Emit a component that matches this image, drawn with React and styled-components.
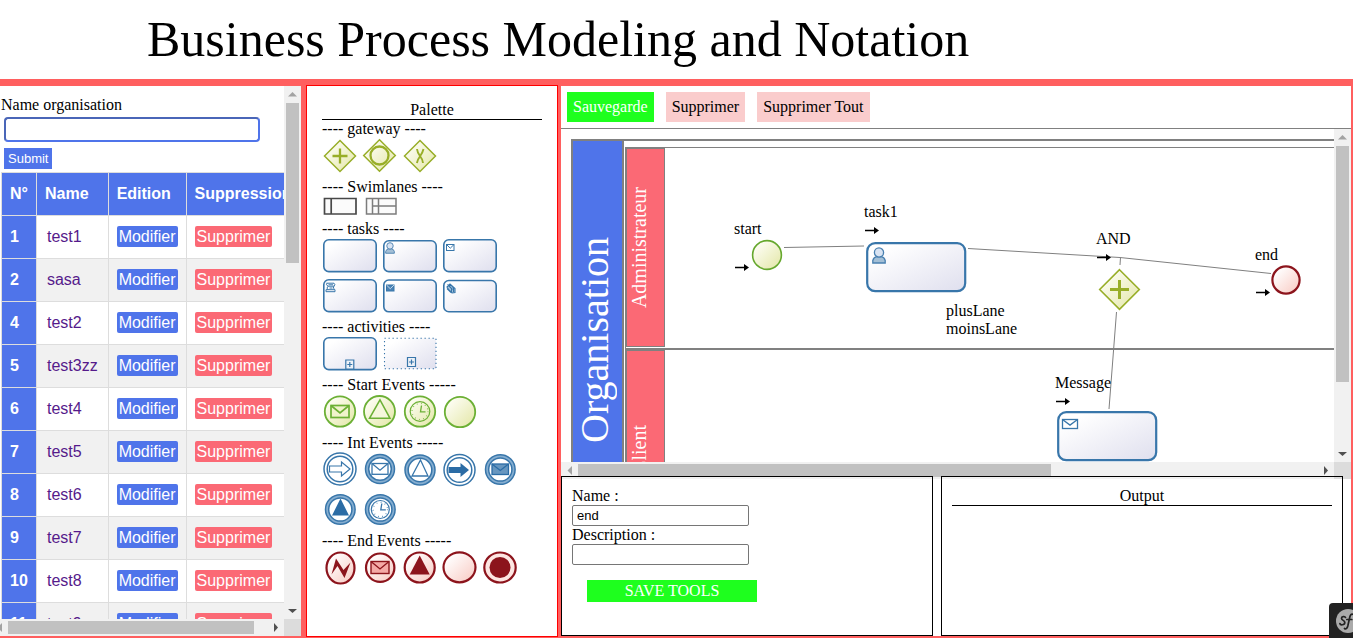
import React from "react";
import styled, { createGlobalStyle, css } from "styled-components";

const BLUE = "#4f74ea";
const PINK = "#fb6975";
const FRAME = "#ff5f5f";
const GREEN = "#1eff1e";
const SANS = '"Liberation Sans", Arial, sans-serif';

const GlobalStyle = createGlobalStyle`
  *, *::before, *::after { box-sizing: border-box; }
  body {
    margin: 0;
    background: #fff;
    color: #000;
    font: 16px/18px "Liberation Serif", "Times New Roman", serif;
  }
  button, input { font-family: inherit; margin: 0; }
`;

const Page = styled.div`
  display: flex;
  flex-direction: column;
  height: 100vh;
  overflow: hidden;
`;

const Title = styled.h1`
  margin: 0;
  padding-left: 147px;
  font-size: 50px;
  font-weight: 400;
  line-height: 79px;
  white-space: nowrap;
`;

const Workspace = styled.main`
  flex: 1;
  min-height: 0;
  display: flex;
  background: ${FRAME};
  padding: 6px 2px 1px 0;
`;

/* ---------- scroll bars ---------- */

const ScrollFrame = styled.div`
  display: grid;
  grid-template-columns: minmax(0, 1fr) 17px;
  grid-template-rows: minmax(0, 1fr) 17px;
  background: #fff;
  min-height: 0;
`;

const Viewport = styled.div`
  position: relative;
  overflow: hidden;
  min-width: 0;
`;

const Track = styled.div`
  display: flex;
  flex-direction: ${(p) => (p.$vertical ? "column" : "row")};
  background: #f1f1f1;
  min-width: 0;
  min-height: 0;
  overflow: hidden;
`;

const TrackRun = styled.div`
  flex: 1;
  display: flex;
  min-height: 0;
  flex-direction: ${(p) => (p.$vertical ? "column" : "row")};
  padding: ${(p) => (p.$vertical ? "0 2px" : "2px 0")};
`;

const Thumb = styled.div`
  background: #c1c1c1;
  flex: 0 0 ${(p) => p.$share}%;
`;

const TrackEnd = styled.div`
  flex: 0 0 ${(p) => p.$size || 17}px;
  display: flex;
  align-items: center;
  justify-content: ${(p) => (p.$size ? "flex-end" : "center")};
  min-width: 0;
  min-height: 17px;
  overflow: hidden;
  svg { flex: none; }
`;

const Corner = styled.div`
  background: #dcdcdc;
`;

const arrowPaths = {
  up: "M4 10.500 8.500 6 13 10.500z",
  down: "M4 7h9L8.500 11z",
  left: "M11 4v9L6.500 8.500z",
  right: "M7 4v9l4-4.500z",
};

function ScrollArrow({ dir, dim }) {
  return (
    <svg width="17" height="17" aria-hidden="true">
      <path d={arrowPaths[dir]} fill={dim ? "#a3a3a3" : "#505050"} />
    </svg>
  );
}

function ScrollBar({ vertical, share, startSize }) {
  return (
    <Track $vertical={vertical} aria-hidden="true">
      <TrackEnd $size={startSize}>
        <ScrollArrow dir={vertical ? "up" : "left"} dim />
      </TrackEnd>
      <TrackRun $vertical={vertical}>
        <Thumb $share={share} />
      </TrackRun>
      <TrackEnd>
        <ScrollArrow dir={vertical ? "down" : "right"} />
      </TrackEnd>
    </Track>
  );
}

/* ---------- organisation list ---------- */

const Sidebar = styled(ScrollFrame)`
  flex: 0 0 301px;
  margin: 1px 5px 1px 0;
`;

const OrgForm = styled.form`
  display: flex;
  flex-direction: column;
  align-items: flex-start;
  padding: 10px 0 3px 1px;
`;

const OrgInput = styled.input`
  width: 256px;
  height: 25px;
  margin: 3px 3px 6px;
  padding: 0 4px;
  border: 2px solid ${BLUE};
  border-top-color: #4a66b8;
  border-left-color: #4a66b8;
  border-radius: 4px;
  outline: none;
`;

const SubmitButton = styled.button`
  height: 21px;
  margin-left: 3px;
  padding: 0 4px;
  border: 0;
  background: ${BLUE};
  color: #fff;
  font: 13px/21px ${SANS};
`;

const OrgTable = styled.table`
  margin-left: 1px;
  border-collapse: collapse;
  font: 16px/18px ${SANS};

  th, td {
    height: 43px;
    padding: 0 8px;
    border: 1px solid #ddd;
    text-align: left;
    white-space: nowrap;
  }
  th { background: ${BLUE}; color: #fff; }
  tbody tr:nth-child(even) { background: #f1f1f1; }
`;

const OrgLink = styled.a`
  padding: 0 2px;
  color: #551a8b;
  text-decoration: none;
`;

const RowButton = styled.button`
  display: block;
  height: 21px;
  margin-bottom: 1px;
  padding: 0 2px;
  border: 0;
  border-radius: 2px;
  background: ${(p) => (p.$danger ? PINK : BLUE)};
  color: #fff;
  font: 16px/21px ${SANS};
`;

const organisations = [
  [1, "test1"],
  [2, "sasa"],
  [4, "test2"],
  [5, "test3zz"],
  [6, "test4"],
  [7, "test5"],
  [8, "test6"],
  [9, "test7"],
  [10, "test8"],
  [11, "test9"],
];

function OrganisationList() {
  return (
    <Sidebar>
      <Viewport>
        <OrgForm onSubmit={(e) => e.preventDefault()}>
          <label htmlFor="organisation">Name organisation</label>
          <OrgInput id="organisation" type="text" />
          <SubmitButton type="submit">Submit</SubmitButton>
        </OrgForm>
        <OrgTable>
          <thead>
            <tr>
              <th>N°</th>
              <th>Name</th>
              <th>Edition</th>
              <th>Suppression</th>
            </tr>
          </thead>
          <tbody>
            {organisations.map(([id, name]) => (
              <tr key={id}>
                <th scope="row">{id}</th>
                <td><OrgLink href="#">{name}</OrgLink></td>
                <td><RowButton type="button">Modifier</RowButton></td>
                <td><RowButton type="button" $danger>Supprimer</RowButton></td>
              </tr>
            ))}
          </tbody>
        </OrgTable>
      </Viewport>
      <ScrollBar vertical share={32} />
      <ScrollBar share={95} startSize={8} />
      <Corner />
    </Sidebar>
  );
}

/* ---------- drawings shared by palette and canvas ---------- */

const LIME = "#98ae28";
const LEAF = "#6cb035";
const STEEL = "#3876aa";
const WINE = "#8c141c";

function Gradients() {
  const ramp = (id, from, to) => (
    <linearGradient id={id} x1="0" y1="0" x2="1" y2="1">
      <stop offset="0.15" stopColor={from} />
      <stop offset="1" stopColor={to} />
    </linearGradient>
  );
  return (
    <HiddenSvg aria-hidden="true">
      <defs>
        {ramp("fillLime", "#fdfdf3", "#e2e6a4")}
        {ramp("fillTask", "#ffffff", "#dfdfee")}
        {ramp("fillWine", "#ffffff", "#f8c8c0")}
      </defs>
    </HiddenSvg>
  );
}

const HiddenSvg = styled.svg`
  position: absolute;
  width: 0;
  height: 0;
`;

const Diamond = ({ cx, cy, r, w = 1.5 }) => (
  <path d={`M${cx} ${cy - r}l${r} ${r}l${-r} ${r}l${-r} ${-r}z`} fill="url(#fillLime)" stroke={LIME} strokeWidth={w} />
);

const Disc = ({ cx, cy, rx, ry = rx, color, fill, w = 1.8 }) => (
  <ellipse cx={cx} cy={cy} rx={rx} ry={ry} stroke={color} fill={fill} strokeWidth={w} />
);

const DoubleRing = ({ cx, cy, r, dense }) => (
  <>
    <circle cx={cx} cy={cy} r={r} fill={dense ? "#86aed0" : "#fff"} stroke={STEEL} strokeWidth="1.500" />
    <circle cx={cx} cy={cy} r={r - 3.2} fill="#fff" stroke={STEEL} strokeWidth="1.500" />
  </>
);

const Envelope = ({ x, y, w, h, color, fill = "none", flap = color, sw = 1.3 }) => (
  <>
    <rect x={x} y={y} width={w} height={h} fill={fill} stroke={color} strokeWidth={sw} />
    <path d={`M${x} ${y}l${w / 2} ${h * 0.62}l${w / 2} ${-h * 0.62}`} fill="none" stroke={flap} strokeWidth={sw} />
  </>
);

const TaskBox = ({ x = 1.8, y = 1.8, w = 52.400, h = 31.800, r = 5, sw = 1.6, dotted }) => (
  <rect
    x={x} y={y} width={w} height={h} rx={dotted ? 0 : r}
    fill="url(#fillTask)" stroke={STEEL} strokeWidth={dotted ? 1.1 : sw}
    strokeDasharray={dotted ? "1.300 2.700" : undefined}
  />
);

const Person = ({ cx, cy, s = 1 }) => (
  <g transform={`translate(${cx} ${cy}) scale(${s})`} stroke="#4a80b0" strokeWidth="1.3">
    <path d="M-6.200 7.500v-2.500q1-3.500 4-3.800h4.400q3 .3 4 3.800v2.500z" fill="#a3bfd6" />
    <circle cx="0" cy="-3" r="4.600" fill="#d8e3f2" />
  </g>
);

const PlusMark = ({ x, y }) => (
  <path d={`M${x} ${y}h8v9h-8zM${x + 4} ${y + 2}v5M${x + 1.5} ${y + 4.500}h5`} fill="#eef2f8" stroke={STEEL} strokeWidth="1.200" />
);

const Clock = ({ cx, cy, r, color }) => (
  <>
    <circle cx={cx} cy={cy} r={r} fill="none" stroke={color} strokeWidth="1.200" />
    <circle cx={cx} cy={cy} r={r - 1.8} fill="none" stroke={color} strokeWidth="1.200" strokeDasharray="0.700 3.570" />
    <path d={`M${cx + 1.500} ${cy - 6}L${cx + 0.5} ${cy + 0.3}H${cx + 5.500}`} fill="none" stroke={color} strokeWidth="1.300" />
  </>
);

const arrowShape = (x, y) => `M${x} ${y + 3}h12v-4l8.500 7-8.500 7v-4h-12z`;

/* ---------- palette ---------- */

const PalettePanel = styled.aside`
  flex: 0 0 252px;
  margin-right: 3px;
  padding: 15px;
  border: 1px solid #f00;
  background: #fff;
  overflow: hidden;
`;

const PanelHeading = styled.h2`
  margin: 0;
  border-bottom: 1px solid #000;
  font-size: 16px;
  font-weight: 400;
  line-height: 18px;
  text-align: center;
`;

const GroupTitle = styled.h3`
  margin: 0;
  font-size: 16px;
  font-weight: 400;
  line-height: 18px;
`;

const IconRow = styled.div`
  display: flex;
  flex-wrap: wrap;
`;

const ToolIcon = styled.svg`
  display: block;
  width: ${(p) => p.$w || 40}px;
  height: ${(p) => p.$h || 40}px;
`;

const paletteGroups = [
  {
    title: "---- gateway ----",
    icons: [
      <><Diamond cx={18} cy={18} r={15.500} /><path d="M18 10.500v15M10.500 18h15" stroke={LIME} strokeWidth="2.300" /></>,
      <><Diamond cx={17.500} cy={17.500} r={15.800} /><circle cx="17.500" cy="17.500" r="9" fill="none" stroke={LIME} strokeWidth="2.300" /></>,
      <><Diamond cx={18} cy={18} r={15.500} /><path d="M15 11q.5 4 3 7t3 7M21.500 11q-1 4-3.300 7t-3.300 7" fill="none" stroke={LIME} strokeWidth="1.900" /></>,
    ],
  },
  {
    title: "---- Swimlanes ----",
    height: 24,
    icons: [
      <path d="M2.500 2.500h31.500v15.500h-31.500zM9.200 2.500v15.500" fill="#fbfbfb" stroke="#484848" strokeWidth="1.700" />,
      <path d="M4.500 2.500h29.500v15.500h-29.500zM10.500 2.500v15.500M16.500 2.500v15.500M10.500 10h23.500" fill="#fbfbfb" stroke="#7c7c7c" strokeWidth="1.500" />,
    ],
  },
  {
    title: "---- tasks ----",
    width: 60,
    icons: [
      <TaskBox />,
      <><TaskBox y={2.800} h={30.800} /><Person cx={8} cy={10} s={0.7} /></>,
      <><TaskBox /><Envelope x={4.500} y={6.500} w={7.500} h={6} color={STEEL} fill="#fff" sw={1} /></>,
      <><TaskBox /><path d="M4.500 5.200h7.500q1.800 1.500 0 3h-6q-2 2 0 3.500h6.500M5 5.200q-1.500 1.500 1 3M12 8.200q-2 2 1 3.500v2h-9v-2h2M6.500 6.800h4.500M7.500 10h3" fill="none" stroke={STEEL} strokeWidth="1" /></>,
      <><TaskBox y={2} /><Envelope x={4.500} y={7} w={7.500} h={6} color={STEEL} fill="#4b83b5" flap="#c4d8ea" sw={1} /></>,
      <><TaskBox y={2.500} h={31.200} /><path d="M5 9l3-3 5 4.500v4l-3 .5-3-3zM5.500 6.500l5 5M8 6l3.500 4M5 10.500l4 4M7 8.500l2-2M9.500 10.500v3.500M11.500 10v4" fill="#adc8df" stroke={STEEL} strokeWidth="1.100" /></>,
    ],
  },
  {
    title: "---- activities ----",
    width: 60,
    icons: [
      <><TaskBox /><PlusMark x={23.800} y={24} /></>,
      <><TaskBox x={2.500} y={2.200} w={51.500} h={30.500} dotted /><PlusMark x={25.500} y={21.500} /></>,
    ],
  },
  {
    title: "---- Start Events -----",
    icons: [
      <><Disc cx={18} cy={17.500} rx={15.200} color={LEAF} fill="url(#fillLime)" /><Envelope x={9} y={11.500} w={18} h={12} color={LEAF} fill="#f0f3cc" sw={1.700} /></>,
      <><Disc cx={17.500} cy={17.500} rx={15.500} color={LEAF} fill="url(#fillLime)" /><path d="M18 5.800l10 18.500h-20.500z" fill="#f5f7dc" stroke={LEAF} strokeWidth="1.500" /></>,
      <><Disc cx={18} cy={17.500} rx={15.200} color={LEAF} fill="url(#fillLime)" /><Clock cx={18} cy={17.500} r={9.800} color={LEAF} /></>,
      <Disc cx={18} cy={18} rx={15.200} color={LEAF} fill="url(#fillLime)" />,
    ],
  },
  {
    title: "---- Int Events -----",
    icons: [
      <><DoubleRing cx={18} cy={17} r={16} /><path d={arrowShape(7.500, 11)} fill="#fff" stroke={STEEL} strokeWidth="1.200" /></>,
      <><DoubleRing cx={18} cy={17} r={14.500} dense /><Envelope x={10} y={11.500} w={16} h={10.800} color={STEEL} sw={1.300} /></>,
      <><DoubleRing cx={18} cy={18} r={15} dense /><path d="M18.500 8l7.500 16h-16z" fill="#fff" stroke={STEEL} strokeWidth="1.300" /></>,
      <><DoubleRing cx={17.500} cy={18} r={15.500} /><path d={arrowShape(6.500, 12)} fill="#2b6ca5" /></>,
      <><DoubleRing cx={18.300} cy={17.500} r={14.800} dense /><Envelope x={10} y={12} w={16.500} h={10.500} color="#2b6ca5" fill="#6796bf" sw={1.300} /></>,
      <><DoubleRing cx={18.300} cy={17.500} r={14.800} dense /><path d="M18.500 6.500l8.500 17h-17z" fill="#2b6ca5" /></>,
      <><DoubleRing cx={18.300} cy={17.500} r={14.800} dense /><Clock cx={18.300} cy={17.500} r={9} color={STEEL} /></>,
    ],
  },
  {
    title: "---- End Events -----",
    icons: [
      <><Disc cx={18.500} cy={18} rx={14} ry={15.500} color={WINE} fill="url(#fillWine)" w={2.200} /><path d="M9.500 24.500L14 8.500 21.500 20 28.500 12.500 22.500 28 15.500 16z" fill={WINE} /></>,
      <><Disc cx={18.200} cy={17.700} rx={14.200} color={WINE} fill="url(#fillWine)" w={2.200} /><Envelope x={9} y={11.500} w={18} h={12} color={WINE} fill="#f4a9a6" sw={1.400} /></>,
      <><Disc cx={17.700} cy={17.500} rx={15} color={WINE} fill="url(#fillWine)" w={2.200} /><path d="M17.700 5.500l10 19h-20z" fill={WINE} /></>,
      <Disc cx={17.500} cy={17.300} rx={16} ry={15} color={WINE} fill="url(#fillWine)" w={2.200} />,
      <><Disc cx={18} cy={17.500} rx={15.700} ry={15} color={WINE} fill="#fde6e2" w={2.200} /><circle cx="18" cy="17.500" r="10.500" fill={WINE} /></>,
    ],
  },
];

function Palette() {
  return (
    <PalettePanel>
      <PanelHeading>Palette</PanelHeading>
      {paletteGroups.map((g) => (
        <section key={g.title}>
          <GroupTitle>{g.title}</GroupTitle>
          <IconRow>
            {g.icons.map((icon, i) => (
              <ToolIcon key={i} $w={g.width} $h={g.height}>{icon}</ToolIcon>
            ))}
          </IconRow>
        </section>
      ))}
    </PalettePanel>
  );
}

/* ---------- editor ---------- */

const Editor = styled.section`
  flex: 1;
  min-width: 0;
  display: flex;
  flex-direction: column;
  margin: 1px 0;
  background: #fff;
`;

const Toolbar = styled.div`
  display: flex;
  gap: 12px;
  padding: 6px;
  border-bottom: 1px solid #808080;
`;

const ToolbarButton = styled.button`
  height: 30px;
  padding: 0 6px;
  border: 0;
  background: ${(p) => (p.$primary ? GREEN : "#facccc")};
  color: ${(p) => (p.$primary ? "#fff" : "#000")};
  font-size: 16px;
`;

const CanvasFrame = styled(ScrollFrame)`
  flex: 1;
`;

const Pool = styled.div`
  display: flex;
  width: 1400px;
  height: 402px;
  margin: 10px 0 0 10px;
  border: 2px solid #808080;
`;

const sideText = css`
  display: flex;
  align-items: center;
  color: #fff;
  span {
    writing-mode: vertical-rl;
    transform: rotate(180deg);
  }
`;

const PoolHeader = styled.div`
  ${sideText}
  flex: 0 0 51px;
  border-right: 2px solid #808080;
  background: ${BLUE};
  font-size: 40px;
  line-height: 44px;
`;

const LaneStack = styled.div`
  flex: 1;
  padding: 6px 0 0 1px;
`;

const Lane = styled.div`
  height: 202px;
  border: 1px solid #808080;
`;

const LaneHeader = styled.div`
  ${sideText}
  width: 39px;
  height: 199px;
  border: 1px solid #808080;
  background: ${PINK};
  font-size: 20px;
  line-height: 24px;
`;

const Flows = styled.svg`
  position: absolute;
  left: 0;
  top: 0;
  width: 100%;
  height: 100%;
`;

const Node = styled.div`
  position: absolute;
  left: ${(p) => p.$x}px;
  top: ${(p) => p.$y}px;
`;

const NodeDrawing = styled.svg`
  position: absolute;
  left: 0;
  top: 0;
  width: 110px;
  height: 90px;
`;

const Handle = ({ x, y }) => (
  <path d={`M${x} ${y - 0.8}h9v-2.700l5 3.500-5 3.500v-2.700h-9z`} fill="#000" />
);

function Diagram() {
  return (
    <>
      <Flows aria-hidden="true">
        <path
          d="M223 118.500L303 117M407 119.500L559 128.500L710 144.500M559.500 128.500L559 136M555.500 183L548 280"
          fill="none" stroke="#808080" strokeWidth="1"
        />
      </Flows>
      <Node $x={173} $y={91}>
        start
        <NodeDrawing>
          <Disc cx={33} cy={35} rx={14.400} color="#66a82e" fill="url(#fillLime)" w={1.600} />
          <Handle x={1} y={47.500} />
        </NodeDrawing>
      </Node>
      <Node $x={303} $y={74}>
        task1
        <NodeDrawing>
          <TaskBox x={3.200} y={40.200} w={98} h={48} r={8} sw={2.200} />
          <Person cx={15} cy={52.500} />
          <Handle x={1} y={27.500} />
        </NodeDrawing>
      </Node>
      <Node $x={385} $y={173}>
        plusLane<br />moinsLane
      </Node>
      <Node $x={535} $y={101}>
        AND
        <NodeDrawing>
          <Diamond cx={23.500} cy={59.500} r={19.800} w={1.600} />
          <path d="M23.500 50v19M14 59.500h19" stroke={LIME} strokeWidth="3" />
          <Handle x={1} y={27.500} />
        </NodeDrawing>
      </Node>
      <Node $x={694} $y={117}>
        end
        <NodeDrawing>
          <Disc cx={31} cy={34} rx={13.600} color={WINE} fill="url(#fillWine)" w={2.200} />
          <Handle x={1} y={46.500} />
        </NodeDrawing>
      </Node>
      <Node $x={494} $y={245}>
        Message
        <NodeDrawing>
          <TaskBox x={3.200} y={38.200} w={98} h={48} r={8} sw={2.200} />
          <Envelope x={7.500} y={45.500} w={15} h={9} color={STEEL} fill="#fff" sw={1.300} />
          <Handle x={1} y={27.500} />
        </NodeDrawing>
      </Node>
    </>
  );
}

const BottomRow = styled.div`
  position: relative;
  display: flex;
  gap: 8px;
  height: 160px;
  margin-top: -3px;
  padding-right: 8px;
`;

const PropertyForm = styled.form`
  flex: 350 1 0;
  display: flex;
  flex-direction: column;
  align-items: flex-start;
  padding: 10px;
  border: 1px solid #000;
`;

const TextInput = styled.input`
  width: 177px;
  height: 21px;
  padding: 1px 4px;
  border: 1px solid #767676;
  border-radius: 2px;
  background: #fff;
  font: 13px/15px ${SANS};
`;

const SaveButton = styled.button`
  width: 170px;
  height: 22px;
  margin: 15px;
  padding: 0;
  border: 0;
  background: ${GREEN};
  color: #fff;
  font-size: 16px;
`;

const OutputPanel = styled.section`
  flex: 380 1 0;
  padding: 10px;
  border: 1px solid #000;
`;

const DebugBadge = styled.button`
  position: fixed;
  right: 0;
  bottom: 0;
  width: 24px;
  height: 35px;
  padding: 0;
  border: 0;
  border-radius: 4px 0 0 0;
  background: #222;
  overflow: hidden;
  svg { display: block; }
`;

export default function App() {
  return (
    <Page>
      <GlobalStyle />
      <Gradients />
      <Title>Business Process Modeling and Notation</Title>
      <Workspace>
        <OrganisationList />
        <Palette />
        <Editor>
          <Toolbar>
            <ToolbarButton type="button" $primary>Sauvegarde</ToolbarButton>
            <ToolbarButton type="button">Supprimer</ToolbarButton>
            <ToolbarButton type="button">Supprimer Tout</ToolbarButton>
          </Toolbar>
          <CanvasFrame>
            <Viewport>
              <Pool>
                <PoolHeader><span>Organisation</span></PoolHeader>
                <LaneStack>
                  <Lane><LaneHeader><span>Administrateur</span></LaneHeader></Lane>
                  <Lane><LaneHeader><span>Client</span></LaneHeader></Lane>
                </LaneStack>
              </Pool>
              <Diagram />
            </Viewport>
            <ScrollBar vertical share={79} />
            <ScrollBar share={64} />
            <Corner />
          </CanvasFrame>
          <BottomRow>
            <PropertyForm onSubmit={(e) => e.preventDefault()}>
              <label htmlFor="tool-name">Name :</label>
              <TextInput id="tool-name" type="text" defaultValue="end" />
              <label htmlFor="tool-description">Description :</label>
              <TextInput id="tool-description" type="text" />
              <SaveButton type="submit">SAVE TOOLS</SaveButton>
            </PropertyForm>
            <OutputPanel>
              <PanelHeading>Output</PanelHeading>
            </OutputPanel>
          </BottomRow>
        </Editor>
      </Workspace>
      <DebugBadge type="button" aria-label="Symfony">
        <svg width="24" height="35" viewBox="0 0 24 35" aria-hidden="true">
          <circle cx="19" cy="18" r="12" fill="#aaa" />
          <path
            d="M16.500 14.500c-.5-1.500-4-1.300-4 .8 0 2.200 3.500 2 3.300 4.300-.2 2.600-4.600 2.900-4.900.9M15.500 25.500c1.500 1.200 2.800-.5 3.300-2.500l2-9c.5-2 1.500-3.300 3-2.700M17.800 16.500h5"
            fill="none" stroke="#222" strokeWidth="1.700" strokeLinecap="round"
          />
        </svg>
      </DebugBadge>
    </Page>
  );
}
